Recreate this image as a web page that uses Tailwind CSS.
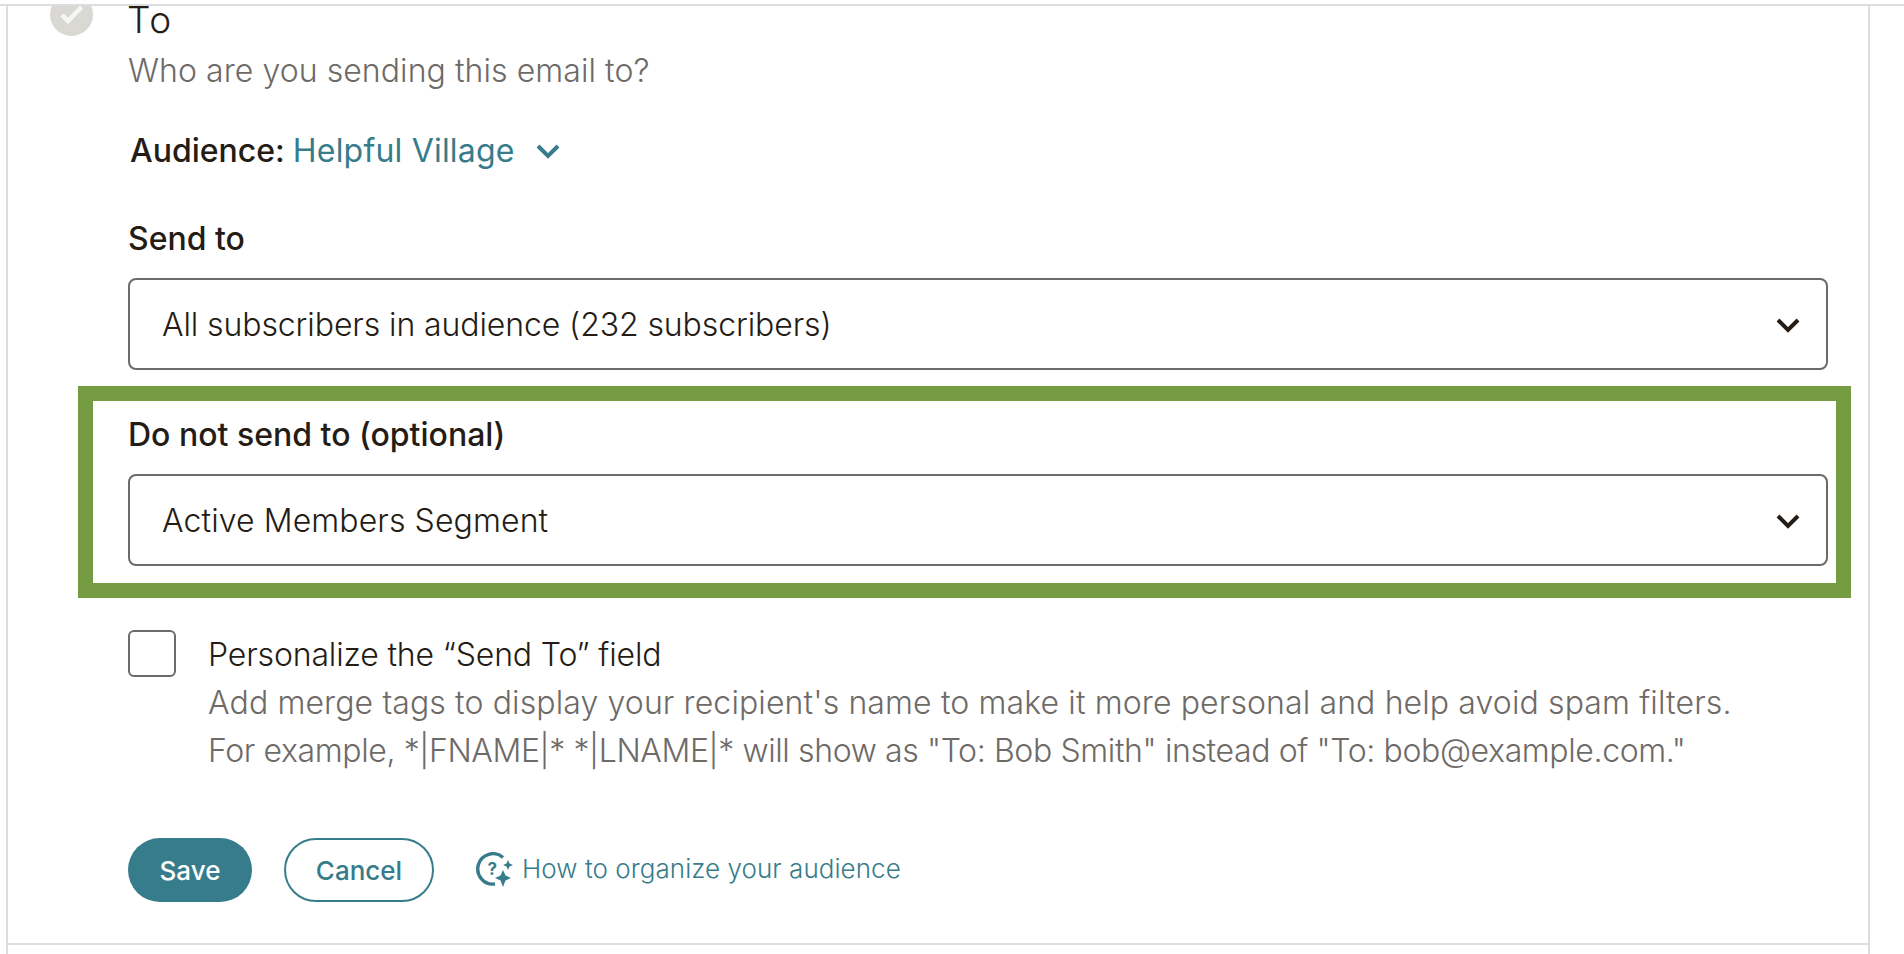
<!DOCTYPE html>
<html>
<head>
<meta charset="utf-8">
<script src="https://cdn.jsdelivr.net/npm/@tailwindcss/browser@4"></script>
</head>
<body class="bg-white overflow-hidden h-[954px] font-['Inter',sans-serif] text-[#241c15]">
<div class="pt-[4px]">
  <div class="border-t-2 border-[#dddddd] pl-[6px]">
  <section class="w-[1864px] h-[948px] border-x-2 border-[#dddddd] overflow-hidden">
    <div class="h-[939px] border-b-2 border-[#dddddd] overflow-hidden">
    <div class="flex items-start -mt-[13px] pl-[42px]">
      <div class="w-[43px] h-[43px] rounded-full bg-[#d9d8d3] flex items-center justify-center shrink-0">
        <svg class="w-[24px] h-[20px]" viewBox="0 0 24 20" fill="none" stroke="#f6f6f4" stroke-width="4.5"><path d="M2 10l6 6L21.5 2"/></svg>
      </div>
      <div class="ml-[35px] w-[1700px]">
        <h2 class="h-[50px] leading-[53px] text-[37px] font-light -ml-[1px] tracking-[1.5px]">To</h2>
        <p class="mt-[3px] h-[50px] leading-[50px] text-[32px] font-light text-[#6e6a67] tracking-[0.07px]">Who are you sending this email to?</p>
        <div class="mt-[30px] h-[50px] leading-[50px] text-[32px] flex items-center">
          <span class="font-medium ml-[2px]">Audience:</span>
          <span class="ml-[8px] text-[#377c8a] tracking-[0.2px]">Helpful Village</span>
          <svg class="ml-[21px] w-[24px] h-[15px]" viewBox="0 0 24 15" fill="none" stroke="#377c8a" stroke-width="4"><path d="M2 2l10 10L22 2"/></svg>
        </div>
        <label class="block mt-[43px] h-[40px] leading-[40px] text-[32px] font-medium">Send to</label>
        <div class="mt-[19px] h-[92px] border-2 border-[#6e6a67] rounded-[8px] flex items-center justify-between pl-[32px] pr-[26px] text-[32px] font-light">
          <span class="mt-[2px] tracking-[-0.1px]">All subscribers in audience (232 subscribers)</span>
          <svg class="w-[24px] h-[16px] mt-[1px]" viewBox="0 0 24 16" fill="none" stroke="#241c15" stroke-width="4"><path d="M2 3l10 10L22 3"/></svg>
        </div>
        <div class="mt-[16px] -ml-[50px] w-[1773px] border-[15px] border-[#759b43] pt-[14px] pb-[17px] pl-[35px] pr-[8px]">
          <label class="block h-[40px] leading-[40px] text-[32px] font-medium">Do not send to (optional)</label>
          <div class="mt-[19px] h-[92px] border-2 border-[#6e6a67] rounded-[8px] flex items-center justify-between pl-[32px] pr-[26px] text-[32px] font-light">
            <span class="mt-[2px] tracking-[0.1px]">Active Members Segment</span>
            <svg class="w-[24px] h-[16px] mt-[1px]" viewBox="0 0 24 16" fill="none" stroke="#241c15" stroke-width="4"><path d="M2 3l10 10L22 3"/></svg>
          </div>
        </div>
        <div class="mt-[32px] flex items-start">
          <div class="w-[48px] h-[47px] border-2 border-[#6e6a67] rounded-[6px] shrink-0"></div>
          <div class="ml-[32px] text-[32px] font-light">
            <div class="h-[49px] leading-[50px] tracking-[-0.15px]">Personalize the “Send To” field</div>
            <div class="h-[48px] leading-[48px] text-[#6e6a67] whitespace-nowrap tracking-[0.12px]">Add merge tags to display your recipient's name to make it more personal and help avoid spam filters.</div>
            <div class="h-[48px] leading-[48px] text-[#6e6a67] whitespace-nowrap tracking-[-0.38px]">For example, *|FNAME|* *|LNAME|* will show as "To: Bob Smith" instead of "To: bob@example.com."</div>
          </div>
        </div>
        <div class="mt-[63px] flex items-center">
          <button class="w-[124px] h-[64px] rounded-full bg-[#377c8a] text-white text-[26px] font-medium">Save</button>
          <button class="ml-[32px] w-[150px] h-[64px] rounded-full border-2 border-[#377c8a] text-[#377c8a] text-[26px] font-medium">Cancel</button>
          <svg class="ml-[42px] w-[38px] h-[36px]" viewBox="0 0 38 36" fill="none">
            <path d="M27 5.5A15.200 15.200 0 1 0 19 32" stroke="#377c8a" stroke-width="3.400"/>
            <text x="11.500" y="23" font-family="Inter" font-size="17" font-weight="700" fill="#377c8a">?</text>
            <path d="M32 8l1.500 3.500 3.500 1.500-3.500 1.500-1.500 3.500-1.500-3.500-3.500-1.500 3.500-1.500z" fill="#377c8a"/>
            <path d="M27 18l2.500 5.500 5.500 2.500-5.500 2.500-2.500 6.500-2.500-6.500-5.500-2.500 5.500-2.500z" fill="#377c8a"/>
          </svg>
          <a class="ml-[8px] -mt-[3px] text-[26px] font-light text-[#377c8a] tracking-[0.05px]">How to organize your audience</a>
        </div>
      </div>
    </div>
    </div>
  </section>
  </div>
</div>
</body>
</html>
